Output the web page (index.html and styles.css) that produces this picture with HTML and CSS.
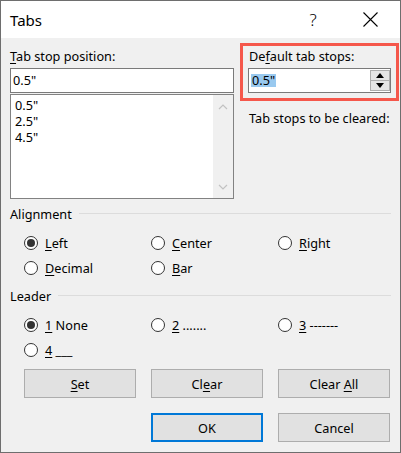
FILE: index.html
```html
<!DOCTYPE html>
<html>
<head>
<meta charset="utf-8">
<link rel="stylesheet" href="styles.css">
</head>
<body>
<div class="dialog">
  <div class="titlebar">
    <span class="title">Tabs</span>
    <span class="help">?</span>
    <span class="close">
      <svg width="15" height="15" viewBox="0 0 15 15"><path d="M0.5 0.5 L14.5 14.5 M14.5 0.5 L0.5 14.5" stroke="#000" stroke-width="1.1" fill="none"/></svg>
    </span>
  </div>
  <div class="content">
    <div class="top">
      <div class="col-left">
        <div class="label"><u>T</u>ab stop position:</div>
        <div class="textbox">0.5"</div>
        <div class="listbox">
          <div class="items">
            <div class="item">0.5"</div>
            <div class="item">2.5"</div>
            <div class="item">4.5"</div>
          </div>
          <div class="scrollbar">
            <svg width="10" height="6" viewBox="0 0 10 6"><path d="M1 5 L5 1 L9 5" stroke="#c2c2c2" stroke-width="1.2" fill="none"/></svg>
            <svg width="10" height="6" viewBox="0 0 10 6"><path d="M1 1 L5 5 L9 1" stroke="#c2c2c2" stroke-width="1.2" fill="none"/></svg>
          </div>
        </div>
      </div>
      <div class="col-right">
        <div class="highlight">
          <div class="label">De<u>f</u>ault tab stops:</div>
          <div class="spinner">
            <span class="selected">0.5"</span>
            <div class="spin">
              <div class="spin-btn"><svg width="8" height="5" viewBox="0 0 8 5"><path d="M0 5 L4 0 L8 5 Z" fill="#000"/></svg></div>
              <div class="spin-btn"><svg width="8" height="5" viewBox="0 0 8 5"><path d="M0 0 L8 0 L4 5 Z" fill="#000"/></svg></div>
            </div>
          </div>
        </div>
        <div class="label cleared">Tab stops to be cleared:</div>
      </div>
    </div>

    <div class="group-head align-head"><span>Alignment</span><span class="rule"></span></div>
    <div class="grid radios">
      <div class="radio"><span class="circle checked"></span><span><u>L</u>eft</span></div>
      <div class="radio"><span class="circle"></span><span><u>C</u>enter</span></div>
      <div class="radio"><span class="circle"></span><span><u>R</u>ight</span></div>
      <div class="radio"><span class="circle"></span><span><u>D</u>ecimal</span></div>
      <div class="radio"><span class="circle"></span><span><u>B</u>ar</span></div>
    </div>

    <div class="group-head leader-head"><span>Leader</span><span class="rule"></span></div>
    <div class="grid radios">
      <div class="radio"><span class="circle checked"></span><span><u>1</u> None</span></div>
      <div class="radio"><span class="circle"></span><span><u>2</u> .......</span></div>
      <div class="radio"><span class="circle"></span><span><u>3</u> -------</span></div>
      <div class="radio"><span class="circle"></span><span><u>4</u> ___</span></div>
    </div>

    <div class="grid buttons">
      <div class="btn"><span><u>S</u>et</span></div>
      <div class="btn"><span>Cl<u>e</u>ar</span></div>
      <div class="btn"><span>Clear <u>A</u>ll</span></div>
    </div>
    <div class="grid buttons final">
      <div class="btn primary col2"><span>OK</span></div>
      <div class="btn col3"><span>Cancel</span></div>
    </div>
  </div>
</div>
</body>
</html>
```

FILE: styles.css
```css
* { box-sizing: border-box; }
html, body { margin: 0; padding: 0; }
body {
  width: 401px;
  height: 453px;
  font-family: "Noto Sans", "Open Sans", sans-serif;
  font-size: 12.7px;
  color: #000;
  background: #f0f0f0;
}
u { text-decoration: underline; text-underline-offset: 2px; text-decoration-thickness: 1px; }

.dialog {
  width: 401px;
  height: 453px;
  border: 1px solid #6e6e6e;
  background: #f0f0f0;
}
.titlebar {
  height: 37px;
  background: #fff;
  display: flex;
  align-items: center;
}
.title {
  padding-left: 9px;
  font-size: 15px;
  flex: 1;
}
.help {
  width: 30px;
  text-align: center;
  font-size: 17px;
  font-weight: 300;
  margin-right: 19px;
}
.close {
  width: 46px;
  margin-right: 7px;
  display: flex;
  justify-content: center;
  align-items: center;
}

.content {
  padding: 5px 0 0 9px;
}
.top {
  display: grid;
  grid-template-columns: 224px 159px;
  column-gap: 6px;
}
.label {
  height: 17px;
  line-height: 17px;
  white-space: nowrap;
}
.col-left .label { margin-top: 5px; margin-bottom: 3px; }
.textbox {
  height: 25px;
  border: 1px solid #7a7a7a;
  background: #fff;
  padding-left: 2px;
  line-height: 23px;
}
.listbox {
  margin-top: 1px;
  height: 105px;
  border: 1px solid #828282;
  background: #fff;
  display: flex;
}
.items {
  flex: 1;
  padding: 2px 0 0 4px;
}
.item { height: 16px; line-height: 16px; overflow: hidden; }
.scrollbar {
  width: 20px;
  background: #f0f0f0;
  display: flex;
  flex-direction: column;
  justify-content: space-between;
  align-items: center;
  padding: 9px 0 8px;
}
.scrollbar svg { display: block; }

.highlight {
  margin-top: 0;
  border: 3px solid #f5574b;
  padding: 2px 5px 5px 5px;
}
.highlight .label { margin-left: 1px; margin-bottom: 3px; }
.spinner {
  height: 25px;
  border: 1px solid #7a7a7a;
  background: #fff;
  display: flex;
  align-items: center;
  padding-left: 2px;
}
.selected {
  background: #99c9ef;
  line-height: 13px;
  height: 13px;
  padding: 0 1px;
  flex: none;
}
.spin {
  margin-left: auto;
  margin-right: 0;
  width: 20px;
  height: 21px;
  display: flex;
  flex-direction: column;
}
.spin-btn {
  flex: 1;
  border: 1px solid #adadad;
  background: #e5e5e5;
  display: flex;
  align-items: center;
  justify-content: center;
}
.spin-btn + .spin-btn { border-top: none; }
.spin-btn svg { display: block; }
.cleared { margin-top: 9px; padding-left: 9px; }

.group-head {
  display: flex;
  align-items: center;
  height: 17px;
  line-height: 17px;
  padding-right: 9px;
}
.group-head .rule {
  flex: 1;
  height: 1px;
  background: #dcdcdc;
  margin-left: 7px;
  margin-top: -2px;
}
.align-head { margin-top: 7px; }
.leader-head { margin-top: 8px; }

.grid {
  display: grid;
  grid-template-columns: 112px 112px 112px;
  column-gap: 15px;
  padding-left: 14px;
}
.radios { margin-top: 7px; grid-auto-rows: 25px; }
.radio {
  display: flex;
  align-items: center;
  white-space: nowrap;
}
.circle {
  width: 14px;
  height: 14px;
  border: 1px solid #333;
  border-radius: 50%;
  background: #fff;
  margin-right: 7px;
  flex: none;
  display: flex;
  align-items: center;
  justify-content: center;
}
.circle.checked::after {
  content: "";
  width: 8px;
  height: 8px;
  border-radius: 50%;
  background: #333;
}

.buttons { margin-top: 7px; }
.btn {
  height: 29px;
  border: 1px solid #adadad;
  background: #e1e1e1;
  display: flex;
  align-items: center;
  justify-content: center;
  white-space: nowrap;
}
.final { margin-top: 15px; }
.btn.primary { border: 2px solid #0078d7; }
.col2 { grid-column: 2; }
.col3 { grid-column: 3; }
```
